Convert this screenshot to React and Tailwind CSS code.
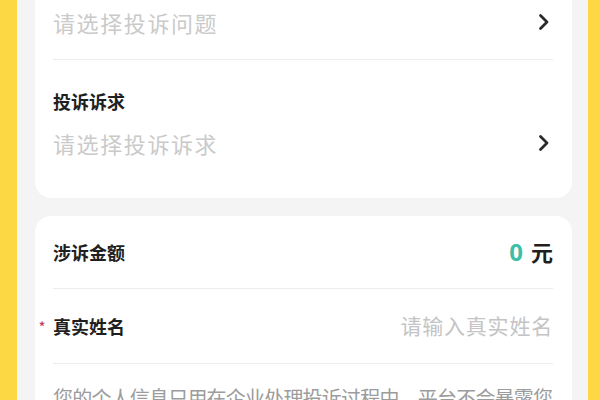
import React from 'react';

const Chevron = () => (
  <svg width="18" height="18" viewBox="0 0 18 18" fill="none" className="shrink-0">
    <path d="M5.5 2.5l6.5 6.5-6.5 6.5" stroke="#2b2b2b" strokeWidth="2.8" strokeLinecap="round" strokeLinejoin="round" />
  </svg>
);

const App = () => {
  return (
    <div
      className="w-[600px] h-[400px] overflow-hidden bg-[#fcd944] px-[17px] pr-[12px]"
      style={{ fontFamily: '"Noto Sans CJK SC", "Noto Sans", sans-serif' }}
    >
      <div className="h-full bg-[#f4f4f5] pl-[18px] pr-[16px]">
        {/* 投诉问题 / 投诉诉求 */}
        <div className="bg-white rounded-b-[16px] pl-[18px] pr-[19px]">
          <div className="flex items-center justify-between pt-[7px] pb-[22px] border-b border-[#ececec]">
            <span className="text-[22px] leading-[30px] tracking-[1.6px] text-[#cacaca]">请选择投诉问题</span>
            <Chevron />
          </div>
          <div className="pt-[28px] pb-[40px]">
            <div className="text-[18px] leading-[26px] font-bold text-[#1f1f1f]">投诉诉求</div>
            <div className="mt-[14px] flex items-center justify-between">
              <span className="text-[22px] leading-[30px] tracking-[1.6px] text-[#cacaca]">请选择投诉诉求</span>
              <Chevron />
            </div>
          </div>
        </div>

        {/* 金额 / 姓名 */}
        <div className="mt-[18px] bg-white rounded-t-[16px] pl-[18px] pr-[19px]">
          <div className="h-[73px] flex items-center justify-between border-b border-[#ececec]">
            <span className="text-[18px] font-bold text-[#1f1f1f]">涉诉金额</span>
            <span className="flex items-baseline gap-[8px]">
              <span className="text-[24px] font-bold text-[#3dbea9]" style={{ fontFamily: '"Noto Sans", sans-serif' }}>0</span>
              <span className="text-[22px] font-bold text-[#1f1f1f]">元</span>
            </span>
          </div>
          <div className="h-[75px] flex items-center justify-between border-b border-[#ececec]">
            <span className="flex items-center text-[18px] font-bold text-[#1f1f1f]">
              <span className="ml-[-14px] w-[14px] text-[12px] text-[#c23a62] leading-none">*</span>
              真实姓名
            </span>
            <span className="text-[21px] tracking-[0.8px] text-[#c4c4c4]">请输入真实姓名</span>
          </div>
          <div className="pt-[20px] text-[20px] leading-[28px] tracking-[-0.8px] text-[#9c9c9c] whitespace-nowrap">
            您的个人信息只用在企业处理投诉过程中，平台不会暴露您
          </div>
        </div>
      </div>
    </div>
  );
};

export default App;
